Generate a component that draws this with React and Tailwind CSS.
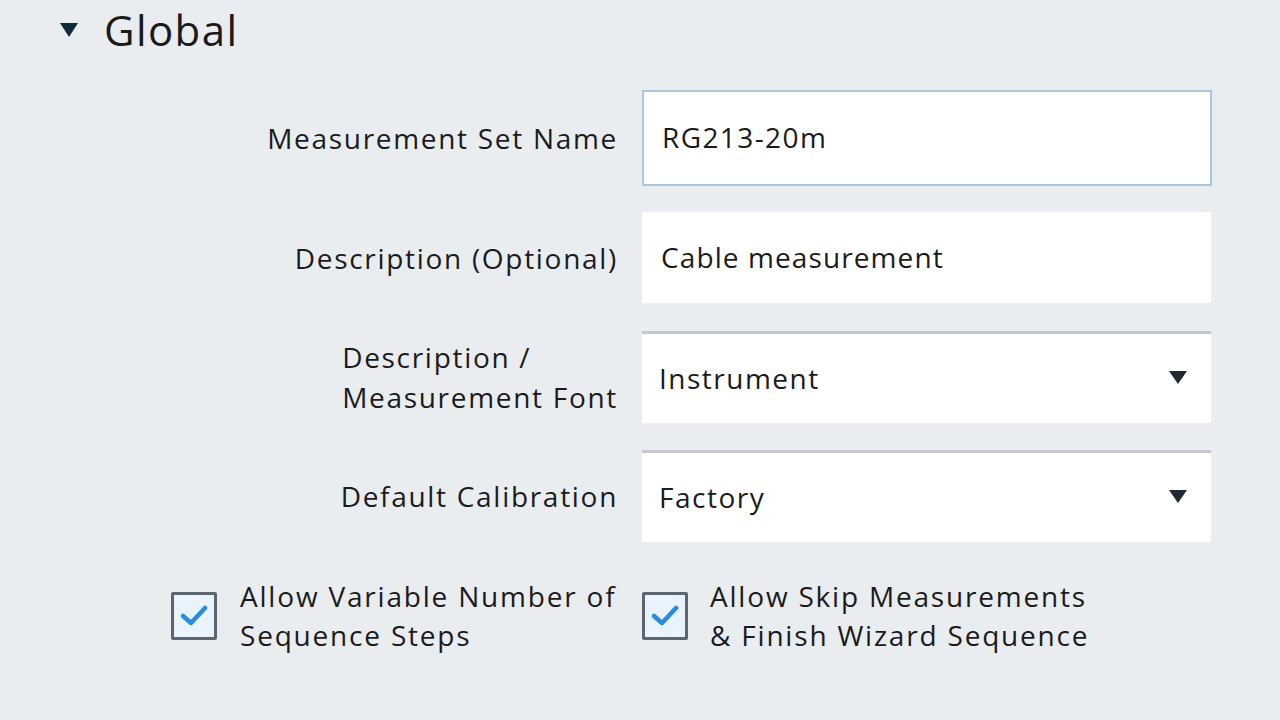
import React from "react";

const font = { fontFamily: '"Open Sans", "Noto Sans", sans-serif' };

function Caret() {
  return (
    <svg width="18" height="14" viewBox="0 0 18 14" className="shrink-0">
      <path d="M0 0 H18 L9 14 Z" fill="#0f2a3a" />
    </svg>
  );
}

function SmallCaret() {
  return (
    <svg width="18" height="13" viewBox="0 0 18 13" className="shrink-0">
      <path d="M0 0 H18 L9 13 Z" fill="#1e2a33" />
    </svg>
  );
}

function Check() {
  return (
    <div className="w-[46px] h-[48px] shrink-0 border-[3px] border-[#5d6670] bg-[#e9f3fc] flex items-center justify-center rounded-[2px]">
      <svg width="28" height="22" viewBox="0 0 28 22">
        <path d="M3 11 L11 18 L25 3" stroke="#2b8be0" strokeWidth="4.5" fill="none" strokeLinecap="round" strokeLinejoin="round" />
      </svg>
    </div>
  );
}

function Row({ label, children, mt }) {
  return (
    <div className={`flex items-center ${mt}`}>
      <div className="w-[642px] pr-[24px] text-right text-[28px] leading-[40px] tracking-[1.7px] text-[#1b1b1b]">{label}</div>
      {children}
    </div>
  );
}

export default function App() {
  return (
    <div style={font} className="w-[1280px] h-[720px] bg-[#e9edf0] overflow-hidden text-[#1b1b1b]">
      <div className="flex items-center pl-[60px] pt-[7px] h-[52px] gap-[26px]">
        <Caret />
        <span className="text-[42px] leading-[52px] tracking-[1.4px] text-[#1a1a1a]">Global</span>
      </div>
      <div className="mt-[38px]">
        <Row label="Measurement Set Name" mt="">
          <div className="w-[570px] h-[96px] bg-white border-2 border-[#a9c6df] flex items-center pl-[18px] pb-[2px] text-[28px] tracking-[1.4px]">
            RG213-20m
          </div>
        </Row>
        <Row label="Description (Optional)" mt="mt-[26px]">
          <div className="w-[569px] h-[91px] bg-white flex items-center pl-[19px] pb-[2px] text-[28px] tracking-[1.1px]">
            Cable measurement
          </div>
        </Row>
        <Row
          label={
            <span className="inline-block text-left leading-[40px]">
              Description /<br />Measurement Font
            </span>
          }
          mt="mt-[28px]"
        >
          <div className="w-[569px] h-[92px] bg-white border-t-[3px] border-[#c3c8cd] flex items-center justify-between pl-[17px] pr-[24px] pb-[2px] text-[28px] tracking-[1.5px]">
            <span>Instrument</span>
            <SmallCaret />
          </div>
        </Row>
        <Row label="Default Calibration" mt="mt-[27px]">
          <div className="w-[569px] h-[92px] bg-white border-t-[3px] border-[#c3c8cd] flex items-center justify-between pl-[17px] pr-[24px] pb-[2px] text-[28px] tracking-[1.5px]">
            <span>Factory</span>
            <SmallCaret />
          </div>
        </Row>
      </div>
      <div className="flex items-center mt-[35px]">
        <div className="w-[642px] flex items-center pl-[171px] gap-[23px]">
          <Check />
          <div className="text-[28px] leading-[39px] tracking-[1.8px]">
            Allow Variable Number of<br />Sequence Steps
          </div>
        </div>
        <div className="flex items-center gap-[22px]">
          <Check />
          <div className="text-[28px] leading-[39px] tracking-[1.8px]">
            Allow Skip Measurements<br />&amp; Finish Wizard Sequence
          </div>
        </div>
      </div>
    </div>
  );
}
